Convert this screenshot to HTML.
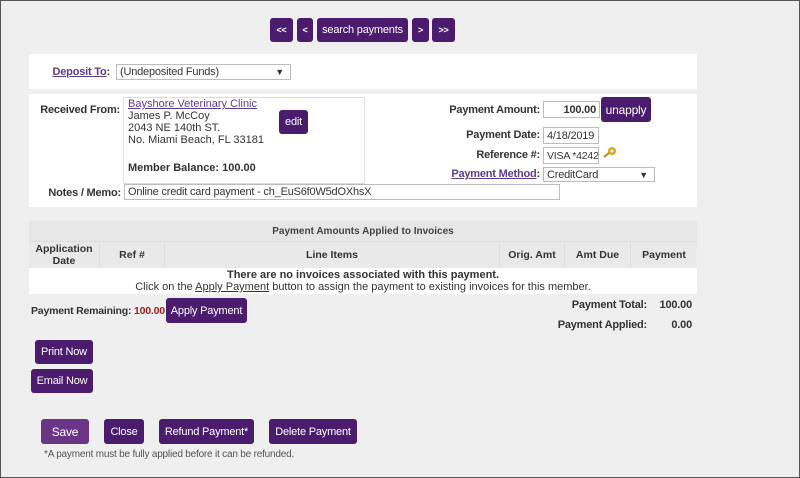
<!DOCTYPE html>
<html><head><meta charset="utf-8"><style>
*{box-sizing:border-box;margin:0;padding:0}
body{width:800px;height:478px;background:#efefef;font-family:"Liberation Sans",sans-serif;font-size:11px;color:#333;position:relative;overflow:hidden;border:1px solid #555}
.a{position:absolute;white-space:nowrap}
.btn{position:absolute;background:#4b1c6e;color:#fff;border-radius:3px;text-align:center;font-size:11px;display:flex;align-items:center;justify-content:center;white-space:nowrap;letter-spacing:-0.2px}
.panel{position:absolute;background:#fff}
.inp{position:absolute;background:#fff;border:1px solid #bbb;font-size:10.5px;padding:0 3px;display:flex;align-items:center;white-space:nowrap;overflow:hidden;letter-spacing:-0.2px}
b{font-weight:bold}
.lnk{color:#5b3b8a;text-decoration:underline}
.lbl{position:absolute;font-weight:bold;text-align:right;white-space:nowrap;font-size:10.5px;letter-spacing:-0.2px}
.th{position:absolute;font-weight:bold;text-align:center;display:flex;align-items:center;justify-content:center;border-right:1px solid #ddd;height:26px;line-height:12px;font-size:10.5px}
</style></head><body>
<div class="btn" style="left:269px;top:17px;width:23px;height:24px;font-weight:bold;font-size:9px">&lt;&lt;</div>
<div class="btn" style="left:296px;top:17px;width:16px;height:24px;font-weight:bold;font-size:9px">&lt;</div>
<div class="btn" style="left:316px;top:17px;width:91px;height:24px">search payments</div>
<div class="btn" style="left:411px;top:17px;width:17px;height:24px;font-weight:bold;font-size:9px">&gt;</div>
<div class="btn" style="left:431px;top:17px;width:23px;height:24px;font-weight:bold;font-size:9px">&gt;&gt;</div>

<div class="panel" style="left:28px;top:53px;width:668px;height:35px"></div>
<div class="lbl" style="right:689px;top:65px;font-size:11px"><span class="lnk">Deposit To</span>:</div>
<div class="inp" style="left:115px;top:63px;width:175px;height:16px;font-size:11px">(Undeposited Funds)<span style="position:absolute;right:6px;font-size:9px">▼</span></div>

<div class="panel" style="left:28px;top:93px;width:668px;height:113px"></div>
<div class="lbl" style="right:679px;top:103px;font-size:11px">Received From:</div>
<div class="a" style="left:122px;top:96px;width:242px;height:87px;border:1px solid #ddd;background:#fff"></div>
<div class="a" style="left:127px;top:97px;line-height:12px;font-size:11px"><span class="lnk">Bayshore Veterinary Clinic</span><br>James P. McCoy<br>2043 NE 140th ST.<br>No. Miami Beach, FL 33181</div>
<div class="a" style="left:127px;top:161px;font-size:11px"><b>Member Balance: 100.00</b></div>
<div class="btn" style="left:278px;top:109px;width:29px;height:24px">edit</div>
<div class="lbl" style="right:259px;top:103px;font-size:11px">Payment Amount:</div>
<div class="inp" style="left:542px;top:100px;width:57px;height:17px;justify-content:flex-end;font-weight:bold;font-size:11px">100.00</div>
<div class="btn" style="left:600px;top:96px;width:50px;height:25px;font-size:12px">unapply</div>
<div class="lbl" style="right:259px;top:128px;font-size:11px">Payment Date:</div>
<div class="inp" style="left:542px;top:126px;width:56px;height:17px;font-size:11px">4/18/2019</div>
<div class="lbl" style="right:259px;top:148px;font-size:11px">Reference #:</div>
<div class="inp" style="left:542px;top:146px;width:56px;height:17px">VISA *4242</div>
<svg class="a" style="left:602px;top:145px" width="14" height="12"><circle cx="9" cy="5" r="4" fill="#d9a520"/><circle cx="9" cy="5" r="1.5" fill="#fff"/><path d="M6 7 L1 11" stroke="#b8860b" stroke-width="2"/></svg>
<div class="lbl" style="right:259px;top:167px;font-size:11px"><span class="lnk">Payment Method</span>:</div>
<div class="inp" style="left:542px;top:166px;width:112px;height:15px;font-size:11px">CreditCard<span style="position:absolute;right:6px;font-size:9px">▼</span></div>
<div class="lbl" style="right:678px;top:186px;font-size:11px">Notes / Memo:</div>
<div class="inp" style="left:123px;top:183px;width:436px;height:16px;font-size:11px">Online credit card payment - ch_EuS6f0W5dOXhsX</div>

<div class="a" style="left:28px;top:220px;width:668px;height:21px;background:#e6e6e6;border-bottom:1px solid #ddd;text-align:center;font-weight:bold;font-size:10px;line-height:21px;color:#444">Payment Amounts Applied to Invoices</div>
<div class="a" style="left:28px;top:241px;width:668px;height:26px;background:#e9e9e9"></div>
<div class="th" style="left:28px;width:71px;top:241px">Application<br>Date</div>
<div class="th" style="left:99px;width:65px;top:241px">Ref #</div>
<div class="th" style="left:164px;width:335px;top:241px">Line Items</div>
<div class="th" style="left:499px;width:65px;top:241px">Orig. Amt</div>
<div class="th" style="left:564px;width:66px;top:241px">Amt Due</div>
<div class="th" style="left:630px;width:66px;border:none;top:241px">Payment</div>
<div class="a" style="left:28px;top:267px;width:668px;height:26px;background:#fff;text-align:center;line-height:12px;padding-top:1px;font-size:11px"><b>There are no invoices associated with this payment.</b><br>Click on the <span style="text-decoration:underline">Apply Payment</span> button to assign the payment to existing invoices for this member.</div>

<div class="a" style="left:30px;top:304px;font-size:10.5px;letter-spacing:-0.2px"><b>Payment Remaining: <span style="color:#9a2020">100.00</span></b></div>
<div class="btn" style="left:165px;top:297px;width:81px;height:25px">Apply Payment</div>
<div class="lbl" style="right:152px;top:298px;font-size:11px">Payment Total:</div>
<div class="lbl" style="right:107px;top:298px;font-size:11px">100.00</div>
<div class="lbl" style="right:152px;top:318px;font-size:11px">Payment Applied:</div>
<div class="lbl" style="right:107px;top:318px;font-size:11px">0.00</div>

<div class="btn" style="left:34px;top:339px;width:58px;height:24px">Print Now</div>
<div class="btn" style="left:30px;top:368px;width:62px;height:24px">Email Now</div>

<div class="btn" style="left:40px;top:418px;width:48px;height:25px;background:#6a3587;font-size:12px">Save</div>
<div class="btn" style="left:103px;top:418px;width:40px;height:25px">Close</div>
<div class="btn" style="left:158px;top:418px;width:95px;height:25px">Refund Payment*</div>
<div class="btn" style="left:268px;top:418px;width:88px;height:25px">Delete Payment</div>
<div class="a" style="left:43px;top:448px;font-size:10px;color:#555;letter-spacing:-0.2px">*A payment must be fully applied before it can be refunded.</div>
</body></html>
